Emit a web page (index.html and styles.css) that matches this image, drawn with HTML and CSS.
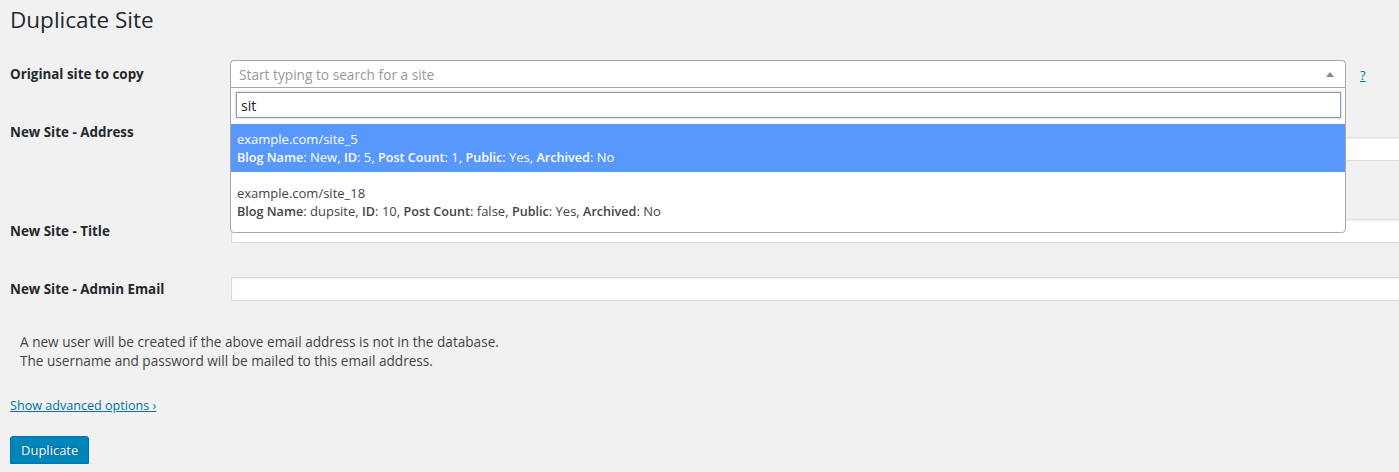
FILE: index.html
```html
<!DOCTYPE html>
<html>
<head>
<meta charset="utf-8">
<title>Duplicate Site</title>
<link rel="stylesheet" href="styles.css">
</head>
<body>
<div class="wrap">
  <h1 class="title">Duplicate Site</h1>
  <form class="form">
    <div class="row row-site">
      <div class="label">Original site to copy</div>
      <div class="field field-site">
        <div class="select-wrap">
          <div class="select">
            <span class="placeholder">Start typing to search for a site</span>
            <span class="arrow"></span>
          </div>
          <div class="dropdown">
            <div class="search"><input class="search-input" type="text" value="sit"></div>
            <ul class="results">
              <li class="option highlighted">
                <div class="line">example.com/site_5</div>
                <div class="line"><b>Blog Name</b>: New, <b>ID</b>: 5, <b>Post Count</b>: 1, <b>Public</b>: Yes, <b>Archived</b>: No</div>
              </li>
              <li class="option">
                <div class="line">example.com/site_18</div>
                <div class="line"><b>Blog Name</b>: dupsite, <b>ID</b>: 10, <b>Post Count</b>: false, <b>Public</b>: Yes, <b>Archived</b>: No</div>
              </li>
            </ul>
          </div>
        </div>
        <a class="help" href="#">?</a>
      </div>
    </div>
    <div class="row row-address">
      <div class="label">New Site - Address</div>
      <div class="field"><input class="text" type="text"></div>
    </div>
    <div class="row">
      <div class="label">New Site - Title</div>
      <div class="field"><input class="text" type="text"></div>
    </div>
    <div class="row">
      <div class="label">New Site - Admin Email</div>
      <div class="field"><input class="text" type="text"></div>
    </div>
  </form>
  <p class="note">A new user will be created if the above email address is not in the database.<br>The username and password will be mailed to this email address.</p>
  <p class="advanced"><a href="#">Show advanced options ›</a></p>
  <button class="button" type="button">Duplicate</button>
</div>
</body>
</html>
```

FILE: styles.css
```css
html, body {
  margin: 0;
  padding: 0;
  background: #f1f1f1;
  overflow: hidden;
}
body {
  font-family: "Open Sans", "Noto Sans", sans-serif;
  font-size: 13px;
  color: #444;
}
.wrap {
  padding: 0 10px;
}
.title {
  margin: 5px 0 0;
  font-size: 22.5px;
  font-weight: 400;
  line-height: 29px;
  color: #23282d;
}
.form {
  margin-top: 10px;
}
.row {
  display: flex;
  align-items: flex-start;
}
.label {
  width: 220px;
  flex: none;
  padding: 20px 0 0;
  line-height: 18px;
  font-size: 13.4px;
  font-weight: 700;
  color: #23282d;
}
.field {
  padding: 17px 0;
  flex: none;
}
.row-site .label {
  padding-top: 21px;
}
.field-site {
  display: flex;
  align-items: flex-start;
  padding: 16px 0 14px;
}
.row-address .label {
  padding-top: 21px;
}
.row-address .field {
  padding: 35px 0 41px 1px;
}
.row .field:not(.field-site) {
  padding-left: 1px;
}
.text {
  display: block;
  width: 1200px;
  height: 24px;
  box-sizing: border-box;
  margin: 0;
  border: 1px solid #ddd;
  background: #fff;
  box-shadow: inset 0 1px 2px rgba(0,0,0,.07);
}
.select-wrap {
  position: relative;
  width: 1116px;
}
.select {
  box-sizing: border-box;
  height: 28px;
  border: 1px solid #aaa;
  border-radius: 4px 4px 0 0;
  background: #fff;
  display: flex;
  align-items: center;
  padding: 0 8px;
  font-size: 13.7px;
}
.placeholder {
  flex: 1;
  color: #999;
}
.arrow {
  width: 0;
  height: 0;
  border-left: 4px solid transparent;
  border-right: 4px solid transparent;
  border-bottom: 5px solid #888;
  margin-right: 3px;
}
.dropdown {
  position: absolute;
  left: 0;
  right: 0;
  top: 27px;
  background: #fff;
  border: 1px solid #aaa;
  border-radius: 0 0 4px 4px;
  z-index: 10;
  padding-bottom: 6px;
}
.search {
  padding: 4px 4px 6px 5px;
}
.search-input {
  display: block;
  box-sizing: border-box;
  width: 100%;
  height: 26px;
  margin: 0;
  padding: 0 4px;
  border: 1px solid #999;
  box-shadow: 0 0 2px rgba(30,140,190,.5);
  font-family: inherit;
  font-size: 14px;
  color: #222;
  outline: none;
}
.results {
  list-style: none;
  margin: 0;
  padding: 0;
}
.option {
  padding: 6px 6px;
  line-height: 18px;
  font-size: 13px;
  color: #444;
}
.line {
  height: 18px;
  overflow: hidden;
}
.option + .option {
  margin-top: 6px;
}
.option b {
  font-weight: 600;
  font-size: 12.6px;
}
.option.highlighted {
  background: #5897fb;
  color: #fff;
}
.help {
  margin: 6px 0 0 14px;
  color: #0073aa;
  font-size: 13px;
}
.note {
  margin: 14px 0 0 10px;
  line-height: 19px;
  font-size: 13.6px;
  color: #444;
}
.advanced {
  margin: 27px 0 0;
  line-height: 18px;
  font-size: 12.6px;
}
.advanced a {
  color: #0073aa;
}
.button {
  margin-top: 21px;
  height: 28px;
  padding: 0 10px 1px;
  border: 1px solid #0073aa;
  border-radius: 3px;
  background: #0085ba;
  box-shadow: 0 1px 0 #006799;
  color: #fff;
  font-family: inherit;
  font-size: 13px;
  text-shadow: 0 -1px 1px #006799, 1px 0 1px #006799;
  cursor: pointer;
}
```
